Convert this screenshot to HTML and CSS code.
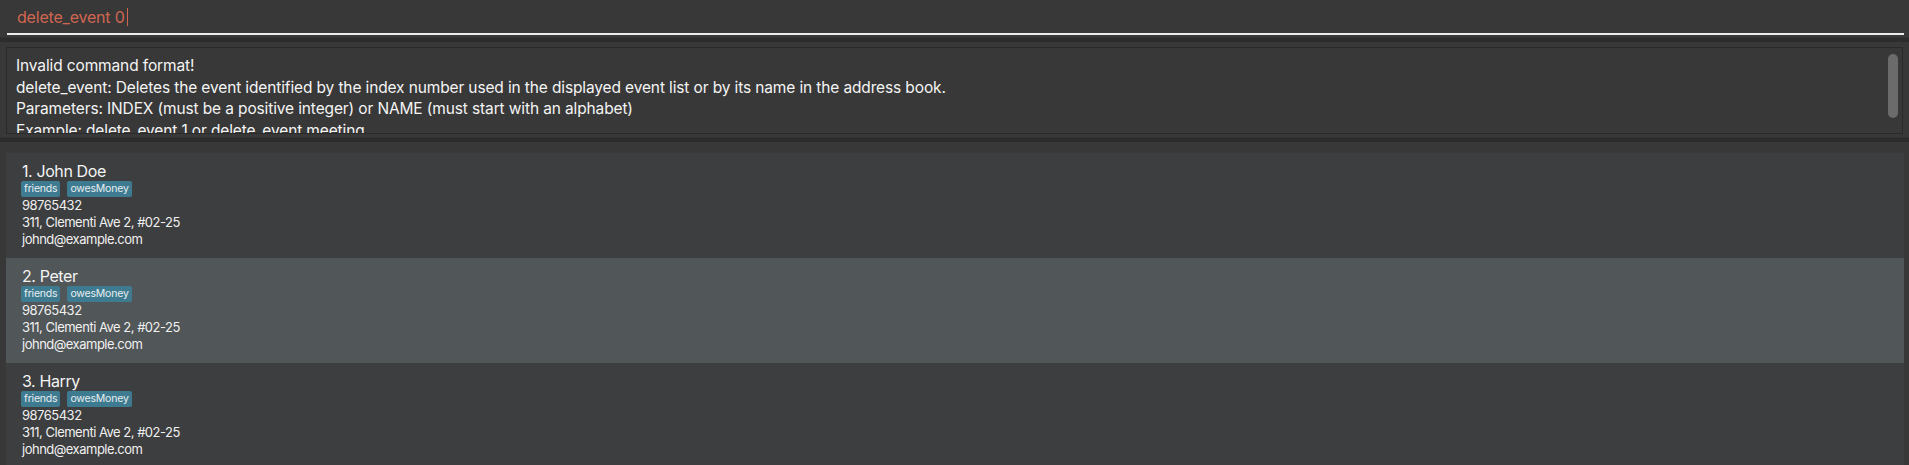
FILE: index.html
```html
<!DOCTYPE html>
<html>
<head>
<meta charset="utf-8">
<link rel="stylesheet" href="styles.css">
</head>
<body>
<div class="app">
  <div class="command-pane">
    <div class="command-field"><span class="command-text">delete_event 0</span><span class="caret"></span></div>
  </div>
  <div class="divider"></div>
  <div class="result-pane">
    <div class="result-box">
      <div class="result-text">
        <div>Invalid command format!</div>
        <div>delete_event: Deletes the event identified by the index number used in the displayed event list or by its name in the address book.</div>
        <div>Parameters: INDEX (must be a positive integer) or NAME (must start with an alphabet)</div>
        <div>Example: delete_event 1 or delete_event meeting</div>
      </div>
      <div class="scrollbar"><div class="thumb"></div></div>
    </div>
  </div>
  <div class="divider"></div>
  <div class="list-pane">
    <div class="list">
      <div class="card">
        <div class="name">1. John Doe</div>
        <div class="tags"><span class="tag">friends</span><span class="tag">owesMoney</span></div>
        <div class="detail">98765432</div>
        <div class="detail">311, Clementi Ave 2, #02-25</div>
        <div class="detail">johnd@example.com</div>
      </div>
      <div class="card odd">
        <div class="name">2. Peter</div>
        <div class="tags"><span class="tag">friends</span><span class="tag">owesMoney</span></div>
        <div class="detail">98765432</div>
        <div class="detail">311, Clementi Ave 2, #02-25</div>
        <div class="detail">johnd@example.com</div>
      </div>
      <div class="card">
        <div class="name">3. Harry</div>
        <div class="tags"><span class="tag">friends</span><span class="tag">owesMoney</span></div>
        <div class="detail">98765432</div>
        <div class="detail">311, Clementi Ave 2, #02-25</div>
        <div class="detail">johnd@example.com</div>
      </div>
    </div>
  </div>
</div>
</body>
</html>
```
FILE: styles.css
```css
html, body {
  margin: 0;
  padding: 0;
  height: 100%;
  overflow: hidden;
  background: #383838;
  font-family: Inter, "Noto Sans", sans-serif;
  color: #ffffff;
}
.app {
  display: flex;
  flex-direction: column;
  height: 465px;
}
.command-pane {
  height: 37px;
  padding: 0 5px 0 7px;
  background: #383838;
}
.command-field {
  height: 35px;
  border-bottom: 2px solid #ececec;
  box-sizing: border-box;
  padding-left: 10px;
  display: flex;
  align-items: center;
  padding-top: 1px;
}
.command-text {
  color: #d06651;
  font-size: 16px;
  letter-spacing: -0.2px;
}
.caret {
  display: inline-block;
  width: 1px;
  height: 18px;
  background: #d06651;
  margin-left: 2px;
}
.divider {
  height: 4px;
  background: #2c2c2c;
  border-top: 1px solid #333;
}
.result-pane {
  padding: 5px 6px 3px 6px;
  background: #383838;
}
.result-box {
  height: 87px;
  border: 1px solid #2a2a2a;
  box-sizing: border-box;
  background: #383838;
  display: flex;
  overflow: hidden;
}
.result-text {
  flex: 1;
  padding: 7px 0 0 9px;
  font-size: 15.5px;
  line-height: 21.5px;
  letter-spacing: -0.13px;
  color: #f4f4f4;
  overflow: hidden;
}
.scrollbar {
  width: 14px;
  padding-top: 6px;
}
.thumb {
  width: 10px;
  height: 64px;
  border-radius: 5px;
  background: #6b6b6b;
}
.list-pane {
  flex: 1;
  padding: 11px 5px 0 6px;
  background: #383838;
  overflow: hidden;
}
.list {
  background: #3c3e3f;
}
.card {
  height: 105px;
  box-sizing: border-box;
  padding: 8px 0 0 16px;
  background: #3c3e3f;
}
.card.odd {
  background: #515658;
}
.name {
  font-size: 16px;
  line-height: 20px;
  letter-spacing: -0.4px;
  color: #f4f4f4;
}
.tags {
  display: flex;
  gap: 7px;
  margin-left: -1px;
}
.tag {
  background: #3e7b91;
  color: #e8eef0;
  font-size: 10.5px;
  line-height: 16px;
  letter-spacing: -0.2px;
  padding: 0 3px;
  border-radius: 2px;
}
.detail {
  font-size: 13px;
  line-height: 17px;
  letter-spacing: -0.5px;
  color: #f0f0f0;
}
```
